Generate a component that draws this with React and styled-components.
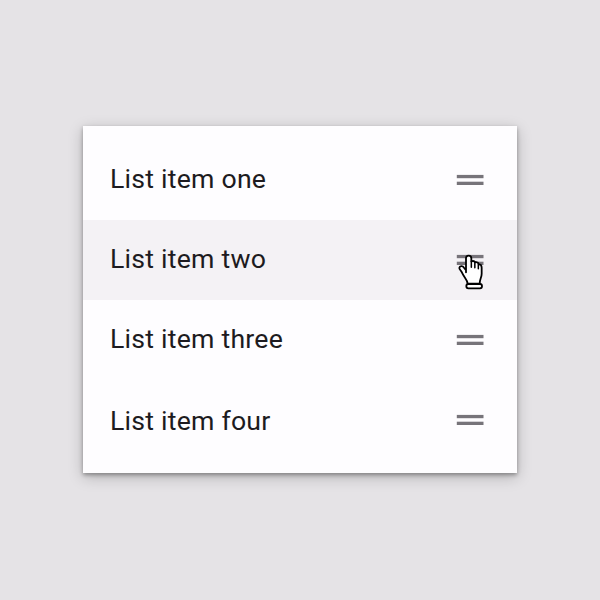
import React from 'react'
import styled, { createGlobalStyle } from 'styled-components'

const GlobalStyle = createGlobalStyle`
  * {
    box-sizing: border-box;
  }

  body {
    margin: 0;
    background: #e5e3e6;
    font-family: Roboto, sans-serif;
  }
`;

const Page = styled.main`
  display: flex;
  justify-content: center;
  height: 600px;
  padding-top: 126px;
`;

const List = styled.ul`
  width: 434px;
  height: 347px;
  margin: 0;
  padding: 14px 0;
  list-style: none;
  background: #fefdff;
  box-shadow: 0 2px 4px rgba(0, 0, 0, 0.32), 0 4px 14px rgba(0, 0, 0, 0.22);
`;

const Row = styled.li`
  display: flex;
  align-items: center;
  justify-content: space-between;
  height: 80px;
  padding: 0 33px 0 27px;
  background: ${({ $active }) => ($active ? '#f4f2f5' : 'transparent')};
`;

const Label = styled.span`
  padding-top: ${({ $drop }) => $drop || 0}px;
  padding-bottom: 2px;
  color: #1d1b20;
  font-size: 26.67px;
  letter-spacing: 0.22px;
  line-height: 32px;
`;

const Handle = styled.span`
  position: relative;
  display: flex;
  width: 28px;
  height: 12px;
`;

const Cursor = styled.svg`
  position: absolute;
  top: 0;
  left: 2px;
  width: 26px;
  height: 36px;
`;

const items = [
  { label: 'List item one' },
  { label: 'List item two', active: true },
  { label: 'List item three' },
  { label: 'List item four', drop: 3 },
]

const HandleIcon = () => (
  <svg width="28" height="12" viewBox="0 0 28 12" fill="#77747a">
    <rect x="0.8" y="0.9" width="26.7" height="3.3" />
    <rect x="0.8" y="7.7" width="26.7" height="3.3" />
  </svg>
)

const HandCursor = () => (
  <Cursor viewBox="55 42 78 108" fill="#fff" stroke="#000" strokeWidth="5.4" strokeLinecap="round" strokeLinejoin="round">
    <path d="M79 97V55C79 44 95 44 95 55V64Q103 61 107 67Q115 65 118 73Q126 73 126 83V101C126 113 120 117 120 131H84C83 118 73 112 67 98C64 91 59 89 59 84C60 77 69 77 73 83L79 91" />
    <path d="M95 64V82M105.5 66V83M116 72V86" fill="none" strokeWidth="4.6" />
    <rect x="80" y="132" width="47" height="13" rx="6" />
  </Cursor>
)

export default function App() {
  return (
    <Page>
      <GlobalStyle />
      <List>
        {items.map(({ label, active, drop }) => (
          <Row key={label} $active={active}>
            <Label $drop={drop}>{label}</Label>
            <Handle>
              <HandleIcon />
              {active && <HandCursor />}
            </Handle>
          </Row>
        ))}
      </List>
    </Page>
  )
}
